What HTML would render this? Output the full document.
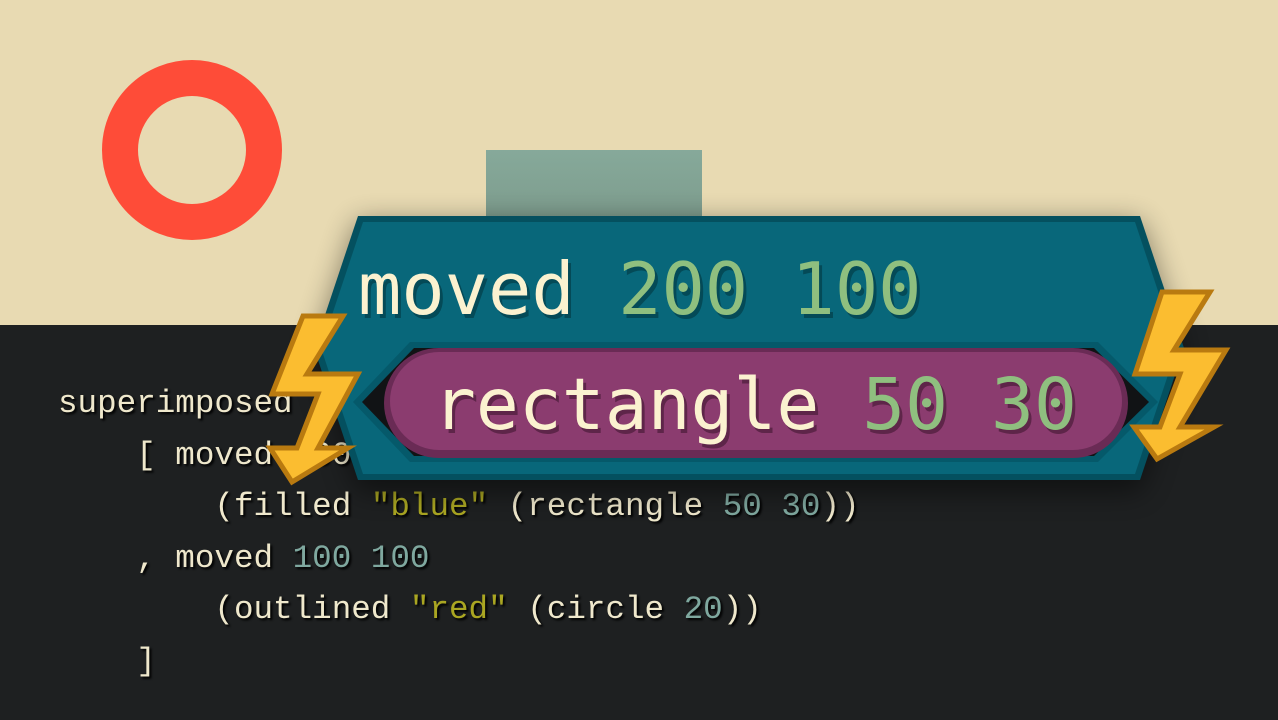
<!DOCTYPE html>
<html><head><meta charset="utf-8"><style>
html,body{margin:0;padding:0;width:1278px;height:720px;overflow:hidden;background:#1e2021;}
.top{position:absolute;left:0;top:0;width:1278px;height:325px;background:#e8dab2;}
.code{position:absolute;left:58px;top:378px;font-family:"Liberation Mono",monospace;font-size:32.6px;line-height:51.5px;color:#efe8cc;white-space:pre;text-shadow:2px 2px 2px #000;}
.n{color:#7fa89f}.s{color:#aaa622}
svg{position:absolute;left:0;top:0}
</style></head><body>
<div class="top"></div>
<div style="position:absolute;left:102px;top:60px;width:108px;height:108px;border:36px solid #fe4c38;border-radius:50%"></div>
<div style="position:absolute;left:486px;top:150px;width:216px;height:80px;background:linear-gradient(#86a99a,#7c9a8b)"></div>
<div class="code">superimposed
    [ moved 200 100
        (filled <span class="s">"blue"</span> (rectangle <span class="n">50 30</span>))
    , moved <span class="n">100 100</span>
        (outlined <span class="s">"red"</span> (circle <span class="n">20</span>))
    ]</div>
<svg width="1278" height="720" viewBox="0 0 1278 720">
<defs><filter id="sh" x="-20%" y="-30%" width="140%" height="160%"><feGaussianBlur stdDeviation="14"/></filter></defs>
<polygon points="358,222 1140,222 1184,354 1140,492 358,492 314,354" fill="#000" opacity="0.45" filter="url(#sh)"/>
<polygon points="358,216 1140,216 1184,348 1140,480 358,480 314,348" fill="#04505f"/>
<polygon points="363,222 1135,222 1177,348 1135,474 363,474 321,348" fill="#08677a"/>
<polygon points="410,342 1098,342 1158,402 1098,462 410,462 353,402" fill="#05596a"/>
<polygon points="414,348 1094,348 1149,402 1094,456 414,456 362,402" fill="#111315"/>
<rect x="384" y="348" width="744" height="110" rx="55" fill="#6a2b55"/>
<rect x="390" y="352" width="732" height="98" rx="49" fill="#8b3c6f"/>
<g font-family="DejaVu Sans Mono,monospace" style="white-space:pre">
<text x="361" y="318" font-size="72" fill="#044a57">moved <tspan>200 100</tspan></text>
<text x="358" y="314" font-size="72" fill="#fbf2d0">moved <tspan fill="#8fbf7f">200 100</tspan></text>
<text x="436" y="433" font-size="71.3" fill="#5e2549">rectangle 50 30</text>
<text x="433" y="429" font-size="71.3" fill="#fbf2d0">rectangle <tspan fill="#8fbf7f">50 30</tspan></text>
</g>
<g fill="#fbbd30" stroke="#b97a10" stroke-width="5" stroke-linejoin="miter">
<polygon points="303,316 343,316 307,374 358,374 318,448 348,448 292,482 270,448 297,448 318,394 272,394"/>
<polygon points="1162,292 1210,292 1174,350 1226,350 1180,427 1214,427 1157,459 1134,427 1160,427 1180,374 1135,374"/>
</g>
</svg>
</body></html>
